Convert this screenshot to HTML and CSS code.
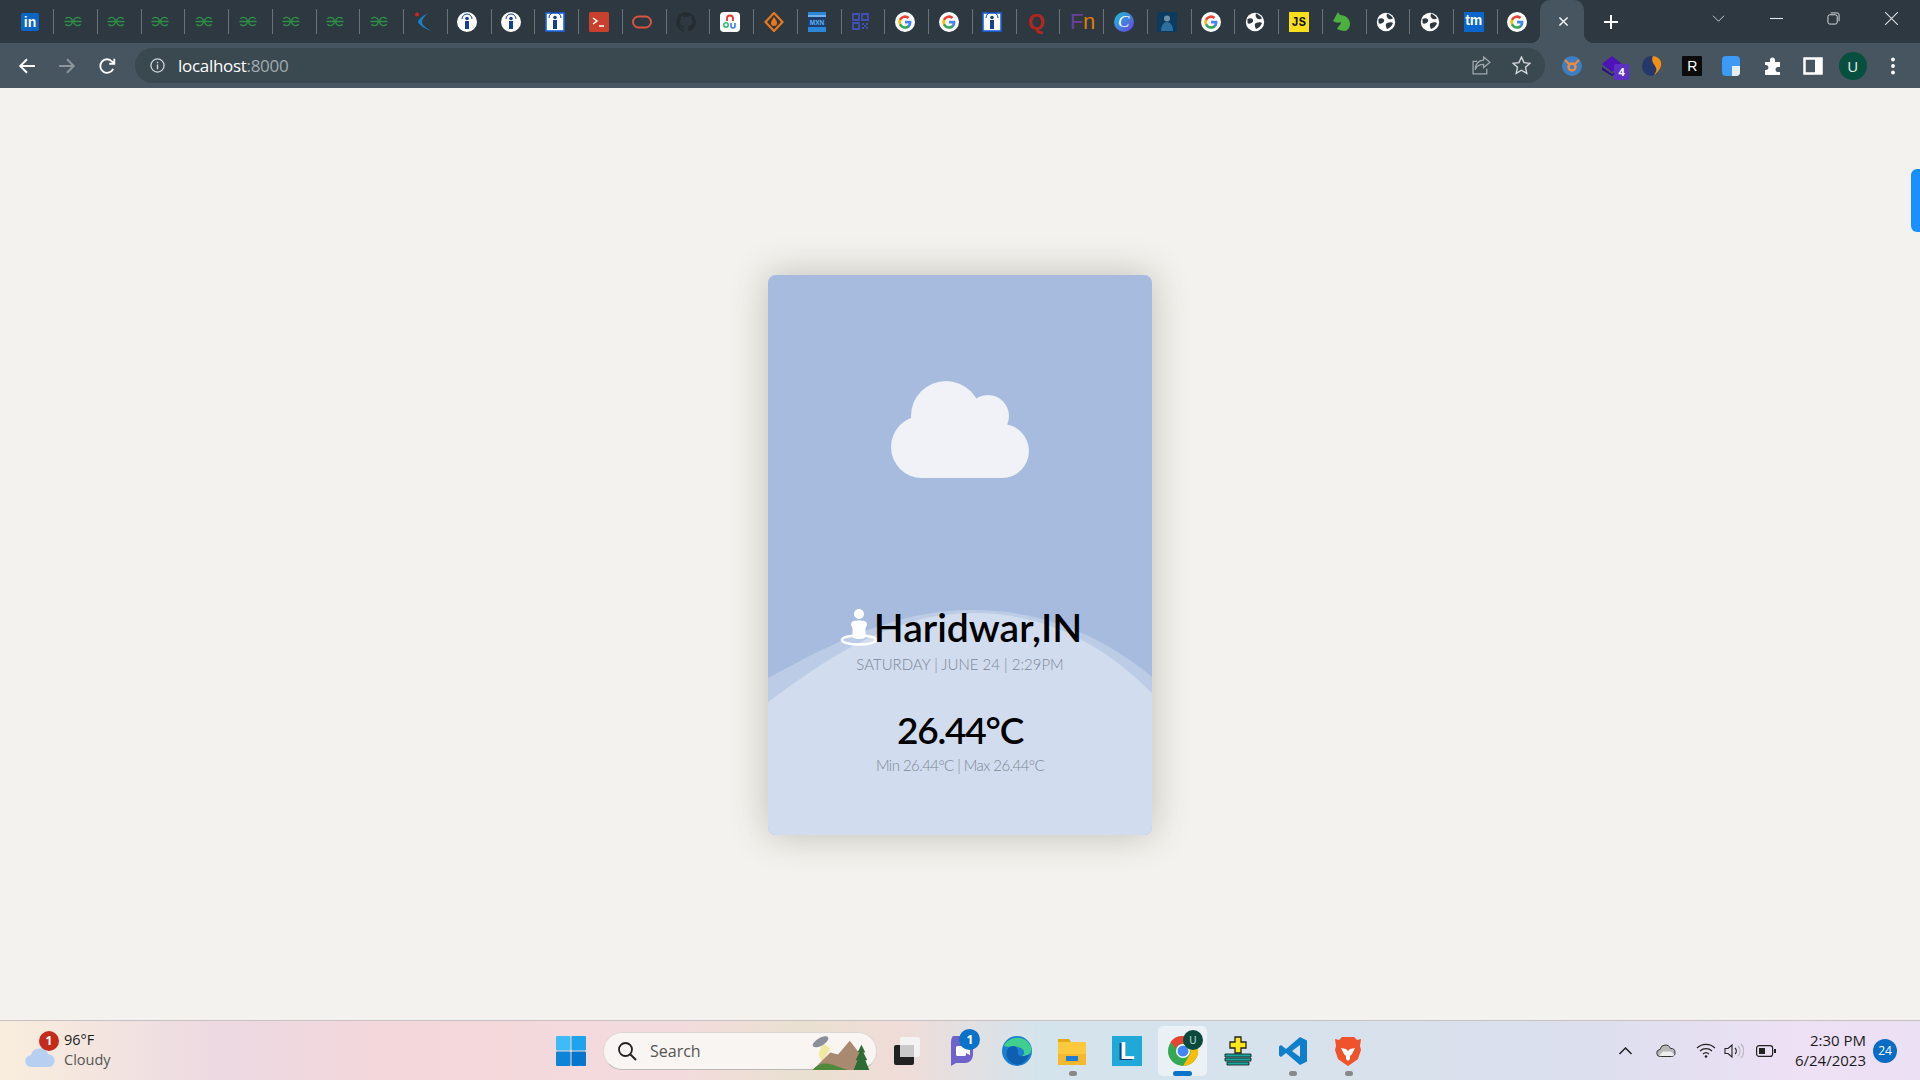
FILE: index.html
```html
<!DOCTYPE html>
<html lang="en">
<head>
<meta charset="utf-8">
<title>Weather</title>
<link rel="stylesheet" href="styles.css">
</head>
<body>
<svg class="defs" width="0" height="0" aria-hidden="true">
  <symbol id="gfg" viewBox="0 0 20 12"><path d="M.5 6H9.500M10.500 6H19.500M1.500 3A4.500 4.500 0 1 1 1.500 9M18.500 3A4.500 4.500 0 1 0 18.500 9" fill="none" stroke="#2f8d46" stroke-width="1.500"/></symbol>
  <symbol id="goog" viewBox="0 0 20 20"><circle cx="10" cy="10" r="10" fill="#fff"/><path d="M16.400 10.200c0-.5 0-1-.1-1.400H10v2.700h3.600a3 3 0 0 1-1.300 2v1.700h2.100c1.300-1.100 2-2.800 2-5z" fill="#4285f4"/><path d="M10 16.800c1.800 0 3.300-.6 4.400-1.600l-2.100-1.700c-.6.4-1.400.7-2.300.7-1.800 0-3.300-1.200-3.800-2.800H4v1.700a6.800 6.800 0 0 0 6 3.700z" fill="#34a853"/><path d="M6.200 11.400a4 4 0 0 1 0-2.800V6.900H4a6.800 6.800 0 0 0 0 6.200z" fill="#fbbc05"/><path d="M10 5.900c1 0 1.900.3 2.600 1l1.900-1.900A6.800 6.800 0 0 0 4 6.900l2.200 1.700C6.700 7 8.200 5.900 10 5.900z" fill="#ea4335"/></symbol>
  <symbol id="globe" viewBox="0 0 20 20"><circle cx="10" cy="10" r="9.200" fill="#fff"/><path d="M2.500 7c2-1 4-1 5 0s1 3-1 4-3 1-4 0zM11 1.500c3 1 5 3 6 5-2 1-4 1-5 0s-2-3-1-5zM11 11c2-1 5-1 6 0-1 3-3 5-6 6-1-2-2-5 0-6z" fill="#2d3840"/></symbol>
  <symbol id="ibox" viewBox="0 0 20 20"><rect x="1" y="1" width="18" height="18" fill="#fff" stroke="#1a62e0" stroke-width="1.600"/><circle cx="10" cy="5.500" r="1.800" fill="#15408f"/><rect x="8" y="8" width="4" height="9" fill="#15408f"/><path d="M4 6a6 6 0 0 1 12 0" fill="none" stroke="#15408f"/></symbol>
  <symbol id="icirc" viewBox="0 0 20 20"><circle cx="10" cy="10" r="10" fill="#fff"/><circle cx="10" cy="6.500" r="1.800" fill="#15408f"/><rect x="8" y="9" width="4" height="8" fill="#15408f"/><path d="M5 7a5 5 0 0 1 10 0" fill="none" stroke="#15408f"/></symbol>
</svg>

<div class="app">
  <header class="browser">
    <div class="tabstrip">
      <div class="tab"><span class="fav fav-in">in</span></div>
      <div class="tab"><svg class="ic-gfg"><use href="#gfg"/></svg></div>
      <div class="tab"><svg class="ic-gfg"><use href="#gfg"/></svg></div>
      <div class="tab"><svg class="ic-gfg"><use href="#gfg"/></svg></div>
      <div class="tab"><svg class="ic-gfg"><use href="#gfg"/></svg></div>
      <div class="tab"><svg class="ic-gfg"><use href="#gfg"/></svg></div>
      <div class="tab"><svg class="ic-gfg"><use href="#gfg"/></svg></div>
      <div class="tab"><svg class="ic-gfg"><use href="#gfg"/></svg></div>
      <div class="tab"><svg class="ic-gfg"><use href="#gfg"/></svg></div>
      <div class="tab"><svg class="ic" viewBox="0 0 20 20"><path d="M14 1C7 5 4 8 4 10c2 4 7 7 14 9C12 16 8 13 8 10c0-3 3-6 6-9z" fill="#1b7fc4"/><circle cx="3" cy="2.500" r="2" fill="#e01b24"/></svg></div>
      <div class="tab"><svg class="ic"><use href="#icirc"/></svg></div>
      <div class="tab"><svg class="ic"><use href="#icirc"/></svg></div>
      <div class="tab"><svg class="ic"><use href="#ibox"/></svg></div>
      <div class="tab"><svg class="ic" viewBox="0 0 20 20"><rect width="20" height="20" rx="1.500" fill="#c9402f"/><path d="M4 6l4 3-4 3M10 14h5" fill="none" stroke="#fff" stroke-width="1.500"/></svg></div>
      <div class="tab"><svg class="ic" viewBox="0 0 20 20"><rect x="1" y="4.500" width="18" height="11" rx="5.500" fill="none" stroke="#d9533f" stroke-width="2"/></svg></div>
      <div class="tab"><svg class="ic" viewBox="0 0 20 20"><path d="M10 0a10 10 0 0 0-3 19.500c.5 0 .7-.2.7-.5v-2c-2.800.6-3.400-1.300-3.400-1.300-.4-1-1-1.400-1-1.400-.9-.6 0-.6 0-.6 1 .1 1.600 1 1.600 1 .9 1.500 2.300 1.100 2.900.8 0-.6.300-1.100.6-1.300-2.200-.3-4.600-1.100-4.600-5 0-1.100.4-2 1-2.700 0-.2-.4-1.300.1-2.700 0 0 .8-.3 2.700 1a9 9 0 0 1 5 0c1.900-1.300 2.700-1 2.700-1 .5 1.400.2 2.500.1 2.700.6.700 1 1.600 1 2.700 0 3.900-2.300 4.700-4.600 5 .4.300.7.900.7 1.900v2.800c0 .3.200.6.700.5A10 10 0 0 0 10 0z" fill="#252d32"/></svg></div>
      <div class="tab"><svg class="ic" viewBox="0 0 20 20"><rect width="20" height="20" rx="4" fill="#fff"/><path d="M7 9V6.500a3 3 0 0 1 6 0V9" fill="none" stroke="#e0352b" stroke-width="1.800"/><circle cx="6" cy="13" r="2.200" fill="none" stroke="#2eb872" stroke-width="1.500"/><path d="M11 11v3a2 2 0 0 0 4 0v-3" fill="none" stroke="#2f80ed" stroke-width="1.600"/></svg></div>
      <div class="tab"><svg class="ic" viewBox="0 0 20 20"><path d="M10 1l8.500 9-8.500 9-8.500-9z" fill="none" stroke="#e8781c" stroke-width="2.200"/><path d="M10 5c2 3 3 4 3 6a3 3 0 0 1-6 0c0-2 1-3 3-6z" fill="#e8781c"/></svg></div>
      <div class="tab"><svg class="ic" viewBox="0 0 20 20"><rect x="1" width="18" height="20" fill="#2a86d8"/><rect x="1" y="5" width="18" height="10" fill="#1d3f70"/><rect x="1" y="3.500" width="18" height="1" fill="#bcdcf5"/><text x="10" y="13" class="svg-mxn">MXN</text></svg></div>
      <div class="tab"><svg class="ic" viewBox="0 0 20 20"><path d="M2 2h6v6H2zM11 2h6v6h-6zM2 11h6v6H2z" fill="none" stroke="#3f51b5" stroke-width="1.800"/><path d="M11 11h2v2h-2zM15 11h2v2h-2zM13 13h2v2h-2zM11 15h2v2h-2zM15 15h2v2h-2z" fill="#3f51b5"/></svg></div>
      <div class="tab"><svg class="ic"><use href="#goog"/></svg></div>
      <div class="tab"><svg class="ic"><use href="#goog"/></svg></div>
      <div class="tab"><svg class="ic"><use href="#ibox"/></svg></div>
      <div class="tab"><span class="fav fav-q">Q</span></div>
      <div class="tab"><span class="fav fav-fn">F<b>n</b></span></div>
      <div class="tab"><span class="fav fav-c">C</span></div>
      <div class="tab"><svg class="ic" viewBox="0 0 20 20"><rect width="20" height="20" fill="#0d3b5f"/><circle cx="10" cy="6.500" r="3" fill="#6f8fa6"/><path d="M4 19c0-6 3-9 6-9s6 3 6 9z" fill="#2d6f9c"/></svg></div>
      <div class="tab"><svg class="ic"><use href="#goog"/></svg></div>
      <div class="tab"><svg class="ic"><use href="#globe"/></svg></div>
      <div class="tab"><span class="fav fav-js">JS</span></div>
      <div class="tab"><svg class="ic" viewBox="0 0 20 20"><path d="M6 0l2 3c6 0 10 4 10 9 0 4-3 7-5 7-3 0-5-1-8-2 1-3 4-4 4-7-2 1-4 1-6 0L1 9z" fill="#4caf40"/></svg></div>
      <div class="tab"><svg class="ic"><use href="#globe"/></svg></div>
      <div class="tab"><svg class="ic"><use href="#globe"/></svg></div>
      <div class="tab"><span class="fav fav-tm">tm</span></div>
      <div class="tab tab-last"><svg class="ic"><use href="#goog"/></svg></div>
      <div class="tab-active">
        <svg class="tb" viewBox="0 0 16 16"><path d="M3 3l10 10M13 3L3 13" stroke="#fff" stroke-width="1.700"/></svg>
      </div>
      <svg class="newtab" viewBox="0 0 16 16"><path d="M8 1v14M1 8h14" stroke="#fff" stroke-width="2"/></svg>
      <div class="winctl">
        <div class="wbtn"><svg class="w14" viewBox="0 0 14 14"><path d="M1 4l6 6 6-6" fill="none" stroke="#cfd4d7"/></svg></div>
        <div class="wbtn"><svg class="w14" viewBox="0 0 14 14"><path d="M0 7h14" stroke="#e3e6e8" stroke-width="1.200"/></svg></div>
        <div class="wbtn"><svg class="w14" viewBox="0 0 14 14"><rect x="1" y="3" width="10" height="10" rx="2" fill="none" stroke="#e3e6e8"/><path d="M4 1h7a2 2 0 0 1 2 2v7" fill="none" stroke="#e3e6e8"/></svg></div>
        <div class="wbtn"><svg class="w14" viewBox="0 0 14 14"><path d="M0 0l14 14M14 0L0 14" stroke="#e3e6e8" stroke-width="1.100"/></svg></div>
      </div>
    </div>
    <div class="toolbar">
      <div class="nav">
        <svg class="tb" viewBox="0 0 16 16"><path d="M15 8H2M8 2L2 8l6 6" fill="none" stroke="#fff" stroke-width="1.700"/></svg>
        <svg class="tb" viewBox="0 0 16 16"><path d="M1 8h13M8 2l6 6-6 6" fill="none" stroke="#8d979d" stroke-width="1.700"/></svg>
        <svg class="tb" viewBox="0 0 16 16"><path d="M13.500 10.500A6 6 0 1 1 12.500 4L14 5.500M14.500 1.500V6H10" fill="none" stroke="#fff" stroke-width="1.600"/></svg>
      </div>
      <div class="omnibox">
        <svg class="info" viewBox="0 0 16 16"><circle cx="8" cy="8" r="7" fill="none" stroke="#d0d4d7" stroke-width="1.400"/><path d="M8 7v5M8 4v1.600" stroke="#d0d4d7" stroke-width="1.500"/></svg>
        <span class="url">localhost<span class="url-port">:8000</span></span>
        <div class="omni-end">
          <svg class="tb" viewBox="0 0 18 18"><path d="M11 1l6 5-6 5V8C7 8 4 10 3 13 3 8 6 4 11 4zM14 12v5H1V5h4" fill="none" stroke="#9fa7ac" stroke-width="1.200"/></svg>
          <svg class="tb" viewBox="0 0 18 18"><path d="M9 1l2.400 5.300 5.600.6-4.200 3.800 1.200 5.700L9 13.500l-5 2.900 1.200-5.700L1 6.900l5.600-.6z" fill="none" stroke="#d7dadc" stroke-width="1.300"/></svg>
        </div>
      </div>
      <div class="exts">
        <div class="ext"><svg class="tb20" viewBox="0 0 20 20"><circle cx="10" cy="10" r="10" fill="#3f7ec0"/><circle cx="10" cy="11" r="3.500" fill="none" stroke="#f28a3a" stroke-width="2.500"/><path d="M3 4l4 4M17 4l-4 4" stroke="#f28a3a" stroke-width="2.200"/></svg></div>
        <div class="ext ext-badged"><svg class="tb20" viewBox="0 0 20 20"><path d="M10 0l10 8-10 8L0 8z" fill="#4d12b8"/><path d="M0 11l10 7 10-7v3l-10 6-10-6z" fill="#2f1080"/></svg><span class="badge4">4</span></div>
        <div class="ext"><svg class="tb20" viewBox="0 0 20 20"><ellipse cx="9" cy="10" rx="9" ry="10" fill="#25386b"/><path d="M11 0c7 1 9 6 8 10-1 3-4 8-7 9 3-4 3-6 1-9-2-3-4-6-2-10z" fill="#f28f16"/></svg></div>
        <div class="ext"><span class="fav fav-r">R</span></div>
        <div class="ext"><svg class="tb20" viewBox="0 0 20 20"><rect width="18" height="20" rx="4" fill="#3e9bf5"/><path d="M10 10h8v6a4 4 0 0 1-4 4h-4z" fill="#e6eef6"/></svg></div>
        <div class="ext"><svg class="tb20" viewBox="0 0 20 20"><path d="M2 6h5V4a2.500 2.500 0 0 1 5 0v2h5v5h-2a2.500 2.500 0 0 0 0 5h2v3H2v-5h1a2.500 2.500 0 0 0 0-5H2z" fill="#fff"/></svg></div>
        <div class="ext"><svg class="tb20" viewBox="0 0 20 20"><rect x="1.500" y="2.500" width="17" height="15" fill="none" stroke="#fff" stroke-width="2.500"/><rect x="12" y="3" width="6" height="14" fill="#fff"/></svg></div>
        <div class="ext"><span class="avatar">U</span></div>
        <div class="ext"><svg class="tb20" viewBox="0 0 20 20"><circle cx="10" cy="3.500" r="1.900" fill="#fff"/><circle cx="10" cy="10" r="1.900" fill="#fff"/><circle cx="10" cy="16.500" r="1.900" fill="#fff"/></svg></div>
      </div>
    </div>
  </header>

  <main class="page">
    <section class="card">
      <svg class="waves" viewBox="0 0 384 560" aria-hidden="true">
        <path d="M0 403C70 365 130 335 205 335C280 335 340 365 384 402V560H0Z" fill="#bccce6"/>
        <path d="M0 427C70 375 130 338 205 338C280 338 335 370 384 418V560H0Z" fill="#d1dcee"/>
      </svg>
      <svg class="cloud" viewBox="0 0 138 97" aria-hidden="true">
        <g fill="#f0f2f7">
          <circle cx="55" cy="35" r="35"/><circle cx="97" cy="35" r="21"/><circle cx="31" cy="66" r="31"/><circle cx="111" cy="70" r="27"/>
          <rect x="31" y="30" width="80" height="67"/>
        </g>
      </svg>
      <h1 class="city">
        <svg class="pin" viewBox="0 0 38 38" aria-hidden="true">
          <circle cx="19" cy="6" r="5" fill="#fff"/>
          <path d="M11 17c0-4 3-4.500 8-4.500s8 .5 8 4.500l-1.500 3v8c0 2-1.500 3-6.500 3s-6.500-1-6.500-3v-8z" fill="#fff"/>
          <ellipse cx="19" cy="32" rx="17" ry="4.500" fill="none" stroke="#fff" stroke-width="2.600"/>
        </svg>
        <span>Haridwar,IN</span>
      </h1>
      <p class="sub">SATURDAY | JUNE 24 | 2:29PM</p>
      <p class="temp">26.44°C</p>
      <p class="sub sub-range">Min 26.44°C | Max 26.44°C</p>
    </section>
  </main>

  <footer class="taskbar">
    <div class="weather">
      <div class="weather-icon">
        <svg class="wcloud" viewBox="0 0 32 24"><path d="M7 23a6.500 6.500 0 0 1-1-13 10 10 0 0 1 19-1 7 7 0 0 1 0 14z" fill="#b7d0f2"/></svg>
        <span class="wbadge">1</span>
      </div>
      <div class="weather-text"><span>96°F</span><span class="muted">Cloudy</span></div>
    </div>
    <div class="center">
      <svg class="win" viewBox="0 0 30 30"><rect width="14.500" height="14.500" rx="1" fill="#3fbcf5"/><rect x="15.500" width="14.500" height="14.500" rx="1" fill="#1ea3ec"/><rect y="15.500" width="14.500" height="14.500" rx="1" fill="#0d84d8"/><rect x="15.500" y="15.500" width="14.500" height="14.500" rx="1" fill="#0676cc"/></svg>
      <div class="search">
        <svg class="search-ic" viewBox="0 0 20 20"><circle cx="8.500" cy="8.500" r="6.500" fill="none" stroke="#222" stroke-width="1.800"/><path d="M13 13l6 6" stroke="#222" stroke-width="2"/></svg>
        <span>Search</span>
        <svg class="search-art" viewBox="0 0 66 38"><path d="M14 10l8 6-8 14-4-8z" fill="#f2e9a0"/><ellipse cx="12" cy="9" rx="9" ry="4" transform="rotate(-30 12 9)" fill="#8a8f99"/><path d="M4 38l18-18 8 2 12-14 14 18v12z" fill="#a98a70"/><path d="M4 38c6-8 16-8 24-4l12 4z" fill="#4f8a3c"/><path d="M54 12l4 8h-2l4 8h-2l4 10H46l4-10h-2l4-8h-2z" fill="#2f6b35"/></svg>
      </div>
      <div class="tbi"><svg class="i30" viewBox="0 0 30 30"><rect x="8" y="1" width="20" height="20" rx="2" fill="#f3f3f3"/><rect x="2" y="9" width="20" height="20" rx="2" fill="#222"/><rect x="8" y="9" width="14" height="12" fill="#c9c9c9"/></svg></div>
      <div class="tbi"><svg class="i30" viewBox="0 0 30 30"><path d="M4 6a11 11 0 0 1 22 0v13a8 8 0 0 1-8 8H9l-5 3z" fill="#6d63c9"/><rect x="9" y="10" width="10" height="10" rx="1.500" fill="#fff"/><path d="M19 13l4-2v8l-4-2z" fill="#fff"/></svg><span class="tbadge">1</span></div>
      <div class="tbi"><svg class="i30" viewBox="0 0 30 30"><circle cx="15" cy="15" r="15" fill="#1b7fd0"/><path d="M2 10C6 0 24-2 29 11c2 7-4 10-9 9 3-2 3-6-1-8-6-3-13 0-17-2z" fill="#3fcf8e"/><path d="M12 28C4 25 2 15 8 11c6-3 8 2 8 5-1 3 3 5 6 4 3-1 5-1 6-3-2 7-9 14-16 11z" fill="#0f5fb0"/></svg></div>
      <div class="tbi"><svg class="i30" viewBox="0 0 30 30"><path d="M1 3h11l2 3h-13z" fill="#e6a817"/><rect x="1" y="6" width="28" height="23" fill="#fcc93e"/><rect x="1" y="18" width="28" height="11" fill="#f5b82e"/><rect x="9" y="20" width="12" height="5" fill="#1a7fd4"/></svg><span class="dot"></span></div>
      <div class="tbi"><span class="lapp">L</span></div>
      <div class="tbi tbi-active"><svg class="i30" viewBox="0 0 30 30"><circle cx="15" cy="15" r="15" fill="#34a853"/><path d="M15 0a15 15 0 0 1 13 7.500H15a7.500 7.500 0 0 0-7 5L2.500 6A15 15 0 0 1 15 0z" fill="#ea4335"/><path d="M28 7.500A15 15 0 0 1 15 30l6.500-11A7.500 7.500 0 0 0 20 10z" fill="#fbbc05"/><circle cx="15" cy="15" r="7" fill="#fff"/><circle cx="15" cy="15" r="5.500" fill="#4285f4"/></svg><span class="tavatar">U</span><span class="bar"></span></div>
      <div class="tbi"><svg class="i30" viewBox="0 0 30 30"><path d="M12 1h6v5h5v6h-5v5h-6v-5H7V6h5z" fill="#ffe81a" stroke="#222" stroke-width="1.300"/><path d="M2 18h26v3H2zM2 22h26v3H2zM4 26h22v3H4z" fill="#16a9a0" stroke="#111" stroke-width=".8"/></svg></div>
      <div class="tbi"><svg class="i30" viewBox="0 0 30 30"><path d="M22 1l7 3.500v21L22 29 8 17l-5 4-2-1.500v-9L3 9l5 4zM22 9l-8 6 8 6z" fill="#0f7fcc"/></svg><span class="dot"></span></div>
      <div class="tbi"><svg class="i30" viewBox="0 0 30 30"><path d="M9 1h12l3 3 4-1-1 7 1 4-3 9-7 5-3 2-3-2-7-5-3-9 1-4-1-7 4 1z" fill="#f0532b"/><path d="M8 12l5 1 2 2 2-2 5-1-3 6-2 2v3l-2 2-2-2v-3l-2-2z" fill="#fff"/></svg><span class="dot"></span></div>
    </div>
    <div class="tray">
      <svg class="chev" viewBox="0 0 14 8"><path d="M1 7l6-6 6 6" fill="none" stroke="#222" stroke-width="1.500"/></svg>
      <svg class="od" viewBox="0 0 20 13"><path d="M4.500 12.500a3.500 3.500 0 0 1-.5-7 5.500 5.500 0 0 1 10.500-1 4 4 0 0 1 1 8z" fill="#b9b9b9" stroke="#333" stroke-width="1"/><path d="M3 11.800l4-4.300 8 0 3.500 3.500-2 1h-12z" fill="#eee"/></svg>
      <svg class="wifi" viewBox="0 0 20 15"><path d="M1 5a13 13 0 0 1 18 0M4 8a9 9 0 0 1 12 0M7 11a4.500 4.500 0 0 1 6 0" fill="none" stroke="#222" stroke-width="1.200"/><circle cx="10" cy="13.500" r="1.300" fill="#222"/></svg>
      <svg class="vol" viewBox="0 0 20 16"><path d="M1 5.500h3L8 2v12L4 10.500H1z" fill="none" stroke="#222" stroke-width="1.100"/><path d="M11 5a4 4 0 0 1 0 6" fill="none" stroke="#222" stroke-width="1.100"/><path d="M14 3a7 7 0 0 1 0 10M17 1a10 10 0 0 1 0 14" fill="none" stroke="#b5b5bd" stroke-width="1.100"/></svg>
      <svg class="batt" viewBox="0 0 20 12"><rect x=".6" y=".6" width="16" height="10.800" rx="2.500" fill="none" stroke="#222" stroke-width="1.200"/><rect x="3" y="3" width="6" height="6" fill="#222"/><rect x="18" y="4" width="2" height="4" fill="#222"/></svg>
      <div class="clock"><span>2:30 PM</span><span>6/24/2023</span></div>
      <span class="notif">24</span>
    </div>
  </footer>
</div>
<div class="side-handle"></div>
</body>
</html>
```
FILE: styles.css
```css
* { box-sizing: border-box; }
html, body { margin: 0; height: 100%; overflow: hidden; }
body { font-family: "Open Sans", "Liberation Sans", sans-serif; background: #f3f2ee; }
.defs { position: absolute; }
.app { display: flex; flex-direction: column; height: 1080px; }

/* browser chrome */
.browser { flex: none; }
.tabstrip { height: 43px; background: #2d3840; display: flex; align-items: flex-start; padding-left: 10.4px; }
.tab { flex: none; width: 43.75px; height: 25px; margin-top: 9px; border-right: 1px solid #6b7378; display: flex; align-items: center; padding-left: 9.6px; }
.tab-last { border-right-color: transparent; margin-right: -2px; }
.fav { display: block; flex: none; width: 20px; height: 20px; text-align: center; font-family: "Liberation Sans", sans-serif; font-weight: 700; }
.fav-in { width: 18px; height: 18px; margin-left: 1px; background: #0a66c2; color: #fff; border-radius: 2px; font-size: 14px; line-height: 18px; }
.fav-q { color: #b3261e; font-size: 22px; line-height: 20px; }
.fav-fn { color: #6a3fa0; font-size: 22px; line-height: 20px; font-weight: 400; width: 22px; letter-spacing: -.5px; }
.fav-fn b { color: #e07b00; font-weight: 400; }
.fav-c { border-radius: 50%; background: linear-gradient(135deg, #19c4d4, #6a3fe0); color: #fff; font-family: "Liberation Serif", serif; font-style: italic; font-size: 17px; line-height: 20px; font-weight: 400; }
.fav-js { background: #f7df1e; color: #111; font-size: 12px; line-height: 23px; font-family: "Liberation Mono", monospace; }
.fav-tm { background: #0a66cc; color: #fff; font-size: 14px; line-height: 17px; }
.fav-r { background: #0b0b0b; color: #fff; font-size: 14px; line-height: 20px; font-weight: 400; border-radius: 1px; }
.ic { width: 20px; height: 20px; flex: none; }
.ic-gfg { width: 18px; height: 11px; flex: none; }
.svg-mxn { font-family: "Liberation Sans", sans-serif; font-size: 6.500px; font-weight: 700; fill: #5db3f5; text-anchor: middle; }
.tab-active { width: 44px; height: 43px; background: #46555f; border-radius: 10px 10px 0 0; display: flex; align-items: center; justify-content: center; position: relative; flex: none; padding: 0 0 1px 3px; }
.tab-active::before, .tab-active::after { content: ""; position: absolute; bottom: 0; width: 10px; height: 10px; }
.tab-active::before { left: -10px; background: radial-gradient(circle at 0 0, #2d3840 10px, #46555f 10.5px); }
.tab-active::after { right: -10px; background: radial-gradient(circle at 100% 0, #2d3840 10px, #46555f 10.5px); }
.tb { width: 16px; height: 16px; flex: none; }
.tab-active .tb { width: 13px; height: 13px; }
.newtab { width: 16px; height: 16px; flex: none; margin: 14px 0 0 19px; }
.winctl { margin-left: auto; display: flex; }
.wbtn { width: 57.5px; height: 36px; display: flex; align-items: center; justify-content: center; }
.w14 { width: 13px; height: 13px; }

.toolbar { height: 45px; background: #46555f; display: flex; align-items: center; }
.nav { width: 135px; display: flex; align-items: center; gap: 22px; padding-left: 18px; flex: none; }
.nav .tb { width: 18px; height: 18px; }
.omnibox { width: 1410px; height: 35px; flex: none; background: #3a4850; border-radius: 18px; display: flex; align-items: center; padding-left: 15px; }
.info { width: 15px; height: 15px; flex: none; }
.url { margin-left: 13px; font-size: 17px; letter-spacing: -.3px; color: #fff; }
.url-port { color: #a3abb0; }
.omni-end { margin-left: auto; display: flex; gap: 21px; padding-right: 14px; align-items: center; }
.omni-end .tb { width: 19px; height: 19px; }
.exts { display: flex; padding-left: 7px; }
.ext { width: 40.1px; display: flex; justify-content: center; align-items: center; position: relative; }
.tb20 { width: 20px; height: 20px; flex: none; }
.badge4 { position: absolute; left: 22px; top: 12px; width: 15px; height: 16px; border-radius: 2px; background: #5e2fc4; color: #fff; font-size: 11px; font-weight: 700; line-height: 16px; text-align: center; }
.avatar { width: 28px; height: 28px; border-radius: 50%; background: #07503f; color: #e5efec; font-size: 15px; line-height: 28px; text-align: center; }

/* page + card */
.page { flex: 1; display: flex; align-items: center; justify-content: center; padding-top: 2px; }
.card { width: 384px; height: 560px; position: relative; overflow: hidden; background: #a6bbdd; border-radius: 8px; padding-top: 106px; display: flex; flex-direction: column; align-items: center; box-shadow: 0 0 36px rgba(70, 70, 50, .3); font-family: Lato, sans-serif; }
.card > * { position: relative; }
.card > .waves { position: absolute; left: 0; top: 0; width: 384px; height: 560px; }
.cloud { width: 138px; height: 97px; flex: none; }
.city { margin: 125px 0 0; padding-left: 2px; display: flex; align-items: center; font-size: 39px; font-weight: 600; line-height: 48px; color: #000; height: 48px; }
.pin { width: 38px; height: 38px; flex: none; margin-right: -4px; }
.sub { margin: 3px 0 0; font-size: 15px; line-height: 20px; font-weight: 300; color: #7e8796; }
.temp { margin: 32px 0 0; font-size: 37px; line-height: 48px; font-weight: 600; letter-spacing: -1.2px; color: #000; }
.sub-range { margin-top: 1px; letter-spacing: -.55px; }

/* taskbar */
.taskbar { flex: none; height: 60px; border-top: 1px solid #c9c0c4; position: relative; display: flex; align-items: center; background: linear-gradient(90deg, #f9eedd 0, #ecd9e2 220px, #f4d7da 400px, #f3dbdd 680px, #e9e0d0 800px, #f0dcd8 900px, #d4e4ec 1040px, #d8e1ec 1400px, #dcdfee 1600px, #eee0f5 1800px, #ece0f4 100%); }
.weather { width: 571px; flex: none; display: flex; align-items: center; padding-left: 25px; }
.weather-icon { position: relative; width: 31px; height: 40px; display: flex; align-items: flex-end; padding-bottom: 3px; }
.wcloud { width: 30px; height: 22px; }
.wbadge { position: absolute; left: 14px; top: 0; width: 20px; height: 20px; border-radius: 50%; background: #c42b1c; color: #fff; font-size: 12px; font-weight: 700; line-height: 20px; text-align: center; }
.weather-text { display: flex; flex-direction: column; margin-left: 8px; font-size: 14.5px; line-height: 20px; color: #1b1b1b; transform: translateY(-1px); }
.muted { color: #555; }
.center { flex: none; display: flex; align-items: center; position: absolute; left: 556px; top: 0; height: 59px; }
.win { width: 30px; height: 30px; flex: none; margin-right: 17px; }
.search { width: 274px; height: 38px; border-radius: 19px; background: #f8f5f2; border: 1px solid #ddd8d5; border-bottom-color: #bdb9b6; display: flex; align-items: center; padding-left: 13px; font-size: 16px; color: #555; flex: none; position: relative; margin-right: 2px; }
.search-ic { width: 20px; height: 20px; margin-right: 13px; flex: none; }
.search-art { position: absolute; right: 2px; top: 0; width: 66px; height: 37px; }
.tbi { width: 55.2px; height: 50px; flex: none; display: flex; align-items: center; justify-content: center; position: relative; }
.tbi-active { background: rgba(255, 255, 255, .5); border-radius: 5px; width: 49.2px; margin: 0 3px; }
.i30 { width: 30px; height: 30px; flex: none; }
.tbadge { position: absolute; right: 9px; top: 3px; width: 21px; height: 21px; border-radius: 50%; background: #0a72c8; color: #fff; font-size: 12px; font-weight: 700; line-height: 21px; text-align: center; }
.dot { position: absolute; left: 24px; bottom: 0; width: 8px; height: 5px; border-radius: 3px; background: #888; }
.bar { position: absolute; left: 15px; bottom: 0; width: 19px; height: 5px; border-radius: 3px; background: #0a72c8; }
.lapp { width: 30px; height: 30px; background: #1fa8d8; color: #fff; font-family: "Liberation Sans", sans-serif; font-size: 24px; font-weight: 700; line-height: 30px; text-align: center; display: block; text-shadow: -2px 1px 0 #123e7a; }
.tavatar { position: absolute; left: 25px; top: 4px; width: 20px; height: 20px; border-radius: 50%; background: #0a4a3c; color: #d9e8e4; font-size: 10px; line-height: 20px; text-align: center; }
.tray { position: absolute; left: 1618px; top: 0; height: 59px; display: flex; align-items: center; color: #1b1b1b; }
.chev { width: 15px; height: 8px; flex: none; }
.od { width: 20px; height: 13px; flex: none; margin-left: 23px; }
.wifi { width: 20px; height: 15px; flex: none; margin-left: 20px; }
.vol { width: 20px; height: 16px; flex: none; margin-left: 8px; }
.batt { width: 20px; height: 12px; flex: none; margin-left: 12px; }
.clock { width: 90px; display: flex; flex-direction: column; align-items: flex-end; font-size: 15px; line-height: 20px; flex: none; transform: translateY(-1px); }
.notif { width: 24px; height: 24px; border-radius: 50%; background: #0a6cc4; color: #fff; font-size: 12px; line-height: 24px; text-align: center; margin-left: 7px; flex: none; }

.side-handle { position: fixed; right: 0; top: 169px; width: 9px; height: 63px; background: #1a90ff; border-radius: 6px 0 0 6px; }
```
